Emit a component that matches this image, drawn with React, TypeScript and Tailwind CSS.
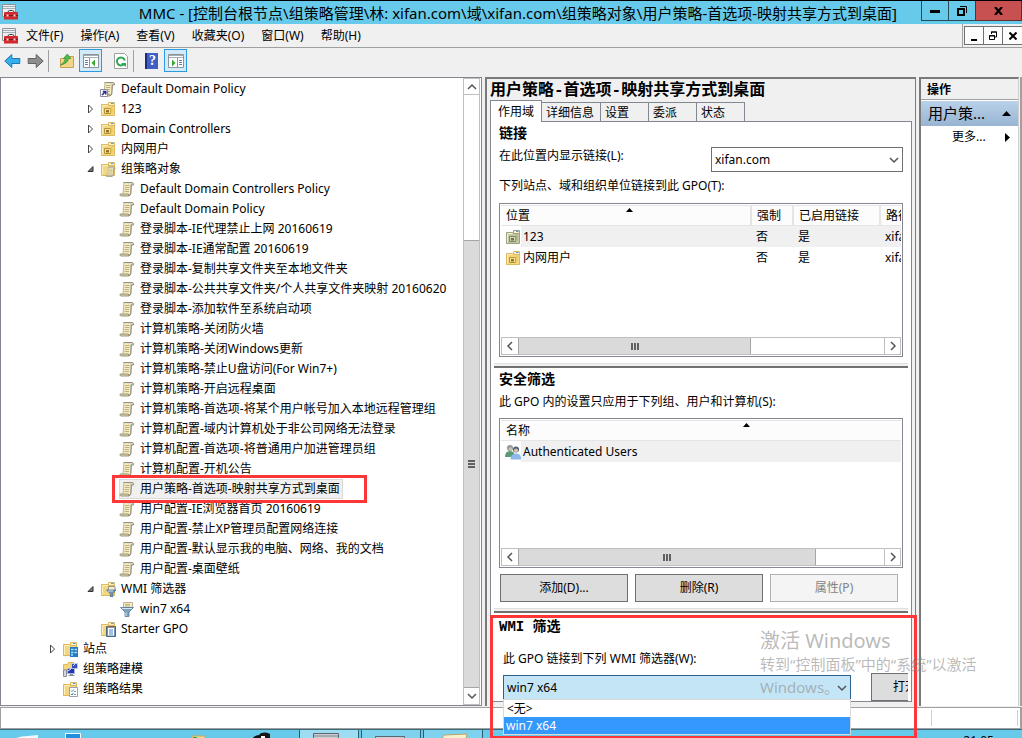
import type { ReactNode } from "react";

type IconName =
  | "gpo"
  | "link"
  | "ou"
  | "ouGreen"
  | "gpoFolder"
  | "wmiFolder"
  | "filter"
  | "starter"
  | "sites"
  | "modeling"
  | "results"
  | "users";

type TreeItem = {
  label: string;
  icon: IconName;
  depth: 0 | 2 | 3;
  state?: "open" | "closed";
  selected?: boolean;
};

const indent = { 0: "pl-[45px]", 2: "pl-[83px]", 3: "pl-[102px]" };

const tree: TreeItem[] = [
  { label: "Default Domain Policy", icon: "link", depth: 2 },
  { label: "123", icon: "ou", depth: 2, state: "closed" },
  { label: "Domain Controllers", icon: "ou", depth: 2, state: "closed" },
  { label: "内网用户", icon: "ou", depth: 2, state: "closed" },
  { label: "组策略对象", icon: "gpoFolder", depth: 2, state: "open" },
  { label: "Default Domain Controllers Policy", icon: "gpo", depth: 3 },
  { label: "Default Domain Policy", icon: "gpo", depth: 3 },
  { label: "登录脚本-IE代理禁止上网 20160619", icon: "gpo", depth: 3 },
  { label: "登录脚本-IE通常配置 20160619", icon: "gpo", depth: 3 },
  { label: "登录脚本-复制共享文件夹至本地文件夹", icon: "gpo", depth: 3 },
  { label: "登录脚本-公共共享文件夹/个人共享文件夹映射 20160620", icon: "gpo", depth: 3 },
  { label: "登录脚本-添加软件至系统启动项", icon: "gpo", depth: 3 },
  { label: "计算机策略-关闭防火墙", icon: "gpo", depth: 3 },
  { label: "计算机策略-关闭Windows更新", icon: "gpo", depth: 3 },
  { label: "计算机策略-禁止U盘访问(For Win7+)", icon: "gpo", depth: 3 },
  { label: "计算机策略-开启远程桌面", icon: "gpo", depth: 3 },
  { label: "计算机策略-首选项-将某个用户帐号加入本地远程管理组", icon: "gpo", depth: 3 },
  { label: "计算机配置-域内计算机处于非公司网络无法登录", icon: "gpo", depth: 3 },
  { label: "计算机配置-首选项-将普通用户加进管理员组", icon: "gpo", depth: 3 },
  { label: "计算机配置-开机公告", icon: "gpo", depth: 3 },
  { label: "用户策略-首选项-映射共享方式到桌面", icon: "gpo", depth: 3, selected: true },
  { label: "用户配置-IE浏览器首页 20160619", icon: "gpo", depth: 3 },
  { label: "用户配置-禁止XP管理员配置网络连接", icon: "gpo", depth: 3 },
  { label: "用户配置-默认显示我的电脑、网络、我的文档", icon: "gpo", depth: 3 },
  { label: "用户配置-桌面壁纸", icon: "gpo", depth: 3 },
  { label: "WMI 筛选器", icon: "wmiFolder", depth: 2, state: "open" },
  { label: "win7 x64", icon: "filter", depth: 3 },
  { label: "Starter GPO", icon: "starter", depth: 2 },
  { label: "站点", icon: "sites", depth: 0, state: "closed" },
  { label: "组策略建模", icon: "modeling", depth: 0 },
  { label: "组策略结果", icon: "results", depth: 0 },
];

const menus = ["文件(F)", "操作(A)", "查看(V)", "收藏夹(O)", "窗口(W)", "帮助(H)"];

const bitmapFont = "font-['Liberation_Mono','Noto_Sans_CJK_SC',monospace]";

function FolderShape({ fill = "#f3d67f", edge = "#dcb95f" }: { fill?: string; edge?: string }) {
  return (
    <>
      <path d="M8.500 1.500h6v3h-6z" fill="#fff3cf" stroke={edge} />
      <path d="M11 2.500h2.500" stroke="#4f9be0" />
      <path d="M1.500 3.500h6l1.500 1h5.500v10h-13z" fill={fill} stroke={edge} />
      <path d="M2.500 4.500h5M2.500 5v8.500" stroke="#fff0bf" />
    </>
  );
}

function ScrollShape() {
  return (
    <>
      <path d="M5 1.500h8l-1 2-.5 9.500-1 1.500h-7.500l1-2z" fill="#f5ecc4" stroke="#bdb592" />
      <path d="M4.500 1.500h8.500q2 .3 1.500 2.500h-2" fill="#ded9c8" stroke="#96917f" />
      <path d="M12.500 3.500l-.6 9" stroke="#96917f" />
      <path d="M1 13h8.500l.3 2h-8q-1-.5-.8-2z" fill="#d8ceaa" stroke="#a09978" />
      <path d="M9.500 14.800q2.200-.3 2.400-2.300" fill="none" stroke="#8b8572" />
      <path d="M6 4.500h4.500M6 6.500h4.500M5.500 8.500h4.500M5.500 10.500h4.500" stroke="#bcaf80" />
    </>
  );
}

function Icon({ name }: { name: IconName }) {
  let body: ReactNode;
  switch (name) {
    case "gpo":
      body = <ScrollShape />;
      break;
    case "link":
      body = (
        <>
          <ScrollShape />
          <path d="M.5 8.500h7v7h-7z" fill="#fff" stroke="#8c8c9c" />
          <path d="M2 14l3-3M2.800 10.500h3v3" stroke="#2b2f8f" strokeWidth="1.500" fill="none" />
        </>
      );
      break;
    case "ou":
    case "ouGreen":
      body = (
        <>
          <FolderShape
            fill={name === "ou" ? "#f3d67f" : "#c3c8a0"}
            edge={name === "ou" ? "#dcb95f" : "#9ba283"}
          />
          <path d="M4.500 7.500h6v5h-6z" fill={name === "ou" ? "#f8e3a0" : "#d2d6b4"} stroke={name === "ou" ? "#b8922f" : "#7e866a"} />
          <path d="M6 9h3v2.500h-3z" fill={name === "ou" ? "#8f7228" : "#6c7355"} />
          <path d="M10.500 6.500l2-1.500v6l-2 1.500z" fill={name === "ou" ? "#e9c45c" : "#a9b087"} />
        </>
      );
      break;
    case "gpoFolder":
      body = (
        <>
          <FolderShape />
          <g transform="translate(5 5) scale(.7)">
            <ScrollShape />
          </g>
        </>
      );
      break;
    case "wmiFolder":
      body = (
        <>
          <FolderShape />
          <path d="M8.500 5.500h6.500v4h-6.500z" fill="#f4ecd0" stroke="#9a9580" />
          <path d="M6.500 9h9.500l-3.200 3.500v3.500h-2.500v-3.500z" fill="#6f96b8" stroke="#456a8c" strokeWidth=".7" />
          <path d="M8 10h5" stroke="#c8dff0" />
        </>
      );
      break;
    case "filter":
      body = (
        <>
          <path d="M4.500 1.500h9v5h-9z" fill="#f7edc6" stroke="#b8b091" />
          <path d="M6 3.500h5M6 5h5" stroke="#bcaf80" />
          <path d="M1.500 6.500h13l-4.500 4.500v4.500h-4v-4.500z" fill="#7da2c0" stroke="#557a9a" strokeWidth=".8" />
          <path d="M3 7.500h10M7 11.500v3.500" stroke="#d3e6f3" />
        </>
      );
      break;
    case "starter":
      body = (
        <>
          <FolderShape />
          <path d="M6.500 5.500h9v10h-9z" fill="#6f93bd" stroke="#4a6987" />
          <path d="M6 5.500h10" stroke="#9a6239" />
          <path d="M8 7h6v7.500h-6z" fill="#fff" />
          <path d="M9 9h4M9 11h4M9 13h4" stroke="#4a7fc0" />
        </>
      );
      break;
    case "sites":
      body = (
        <>
          <FolderShape />
          <path d="M8 6h8v10h-8z" fill="#2479c4" />
          <path d="M9 8.500h2.500M12.500 8.500h2.500M9 11.500h2.500M12.500 11.500h2.500M9 14h2" stroke="#a8e0fa" strokeWidth="1.600" />
        </>
      );
      break;
    case "modeling":
      body = (
        <>
          <path d="M1.500 3.500h4l1-2h5v7h-10z" fill="#f3d67f" stroke="#dcb95f" />
          <path d="M9.500 2.500h6v5h-6z" fill="#2f4fc0" stroke="#c5cbe0" />
          <path d="M5.500 7.500h7v5h-7z" fill="#2436b8" stroke="#aeb5cf" />
          <path d="M6 10l3-2M11 5l2-2" stroke="#d3dcff" />
          <path d="M6.500 14.500h6M8 13.500h3" stroke="#8a909c" />
          <path d="M1.500 9v6.500h3v-6.500z" stroke="#8a909c" fill="#d4d7dc" />
        </>
      );
      break;
    case "results":
      body = (
        <>
          <FolderShape />
          <path d="M7.500 6.500h8v9h-8z" fill="#fff" stroke="#9aa2ae" />
          <path d="M9 9.500l1 1 2-2M9 13l1 1 1.500-2" stroke="#2a83b7" fill="none" />
          <path d="M12 10.500h2M12 13.500h2" stroke="#89939d" />
        </>
      );
      break;
    case "users":
      body = (
        <>
          <circle cx="5" cy="4" r="3" fill="#8c9a92" />
          <circle cx="5.500" cy="5" r="1.800" fill="#c9c4b4" />
          <path d="M0 13q0-6 5-6t5 6z" fill="#5c9a78" />
          <circle cx="11" cy="5.500" r="3" fill="#4d5f78" />
          <circle cx="11" cy="6.500" r="2" fill="#d9c4ac" />
          <path d="M5.500 15.500q0-6 5.500-6t5 6z" fill="#8cb9ea" />
        </>
      );
      break;
  }
  return (
    <svg className="size-4 shrink-0" viewBox="0 0 16 16" aria-hidden="true">
      {body}
    </svg>
  );
}

function ConsoleIcon() {
  return (
    <svg className="size-4 shrink-0" viewBox="0 0 16 16" aria-hidden="true">
      <path d="M.5.500h13v12h-13z" fill="#edf0f3" stroke="#8b949d" />
      <path d="M1 2.500h12M1 4.500h12" stroke="#a5adb5" />
      <path d="M6 8.500q0-2 1.500-2h3q1.500 0 1.500 2" fill="none" stroke="#3d3d3d" />
      <path d="M2 9q0-1 1-1h12q1 0 1 1v6.500h-14z" fill="#cf2a30" />
      <path d="M2 11.500h14" stroke="#8a1519" />
      <path d="M4.500 10.500h2v2h-2zM11.500 10.500h2v2h-2z" fill="#f4d6d6" />
    </svg>
  );
}

function ArrowIcon({ back }: { back?: boolean }) {
  return (
    <svg className="h-4 w-[17px]" viewBox="0 0 17 16" aria-hidden="true">
      {back ? (
        <path d="M.8 8l7-6.500v4h8v5h-8v4z" fill="#35aeea" stroke="#1c78b8" />
      ) : (
        <path d="M16.200 8l-7-6.500v4h-8v5h8v4z" fill="#8d8d8d" stroke="#636363" />
      )}
    </svg>
  );
}

function PaneIcon({ right }: { right?: boolean }) {
  return (
    <svg className="size-4" viewBox="0 0 16 16" aria-hidden="true">
      <path d="M.5 1.500h15v13h-15z" fill="#fff" stroke="#8b949d" />
      <path d="M1 2.500h14M1 4.500h14" stroke="#a5adb5" />
      <path d={right ? "M9.500 5v9" : "M6.500 5v9"} stroke="#8b949d" />
      <path
        d={right ? "M11 7.500h3M11 9.500h3M11 11.500h3" : "M2 7.500h3M2 9.500h3M2 11.500h3"}
        stroke="#5c83b5"
      />
      <path d={right ? "M4 6.500l3.500 3.500-3.500 3.500z" : "M12 6.500l-3.500 3.500 3.500 3.500z"} fill="#38a832" />
    </svg>
  );
}

function Chevron({ dir, className = "size-2.5" }: { dir: "up" | "down" | "left" | "right"; className?: string }) {
  const paths = {
    up: "M1 7l4-4 4 4",
    down: "M1 3l4 4 4-4",
    left: "M7 1l-4 4 4 4",
    right: "M3 1l4 4-4 4",
  };
  return (
    <svg className={className} viewBox="0 0 10 10" fill="none" stroke="#555" strokeWidth="1.500" aria-hidden="true">
      <path d={paths[dir]} />
    </svg>
  );
}

function Expander({ state }: { state?: "open" | "closed" }) {
  if (!state) return <span className="w-4 shrink-0" />;
  return (
    <button className="flex w-4 shrink-0 justify-start pl-0.5" aria-label={state === "open" ? "折叠" : "展开"}>
      <svg className="size-2.5" viewBox="0 0 10 10" aria-hidden="true">
        {state === "open" ? (
          <path d="M7 2.500v5h-5z" fill="#777" stroke="#333" />
        ) : (
          <path d="M2.500 1l4 4-4 4z" fill="#fff" stroke="#444" />
        )}
      </svg>
    </button>
  );
}

function TreePane() {
  return (
    <section className="flex w-[482px] shrink-0 border border-[#828790] bg-white">
      <ul className="min-w-0 flex-1 overflow-hidden pt-px">
        {tree.map((item, i) => (
          <li key={i} className={`flex h-5 items-center whitespace-nowrap ${indent[item.depth]}`}>
            <Expander state={item.state} />
            {item.selected ? (
              <div className="relative flex items-center">
                <span className="flex h-5 items-center border border-[#d9d9d9] bg-[#f0f0f0]">
                  <span className="-ml-px flex items-center gap-[5px] pr-0.5">
                    <Icon name={item.icon} />
                    {item.label}
                  </span>
                </span>
                <span className="absolute -top-1 -right-6 -bottom-1 -left-[7px] border-[3px] border-[#fb3737]" />
              </div>
            ) : (
              <span className="flex items-center gap-[5px]">
                <Icon name={item.icon} />
                {item.label}
              </span>
            )}
          </li>
        ))}
      </ul>
      <div className="mr-px flex w-[17px] shrink-0 flex-col border border-[#bfbfbf] bg-white">
        <button className="flex h-4 items-center justify-center border-b border-[#bfbfbf]" aria-label="向上滚动">
          <Chevron dir="up" />
        </button>
        <div className="basis-0 grow-[145]" />
        <div className="flex basis-0 grow-[448] flex-col items-center justify-center gap-px border-y border-[#a6a6a6] bg-[#dadada]">
          <span className="h-0.5 w-[7px] bg-[#606060]" />
          <span className="h-0.5 w-[7px] bg-[#606060]" />
          <span className="h-0.5 w-[7px] bg-[#606060]" />
        </div>
        <button className="flex h-4 items-center justify-center" aria-label="向下滚动">
          <Chevron dir="down" />
        </button>
      </div>
    </section>
  );
}

function HScroll({ thumb }: { thumb: string }) {
  return (
    <div className="flex h-[18px] shrink-0 border border-[#bfbfbf] bg-white">
      <button className="flex w-4 items-center justify-center" aria-label="向左滚动">
        <Chevron dir="left" />
      </button>
      <div className={`flex items-center justify-center gap-px border-x border-[#a6a6a6] bg-[#dadada] ${thumb}`}>
        <span className="h-[7px] w-0.5 bg-[#606060]" />
        <span className="h-[7px] w-0.5 bg-[#606060]" />
        <span className="h-[7px] w-0.5 bg-[#606060]" />
      </div>
      <div className="flex-1" />
      <button className="flex w-4 items-center justify-center border-l border-[#bfbfbf]" aria-label="向右滚动">
        <Chevron dir="right" />
      </button>
    </div>
  );
}

function SortMark() {
  return (
    <svg className="absolute top-0.5 left-1/2 h-1 w-[7px]" viewBox="0 0 7 4" aria-hidden="true">
      <path d="M0 4l3.500-4 3.500 4z" />
    </svg>
  );
}

function LinksTable() {
  const rows: { name: string; icon: IconName }[] = [
    { name: "123", icon: "ouGreen" },
    { name: "内网用户", icon: "ou" },
  ];
  const th = "border-r-2 border-[#e5e5e5] bg-[#fcfcfc] px-[5px] text-left font-normal";
  return (
    <div className="flex h-[154px] flex-col border border-[#828790] bg-white p-px">
      <div className="flex-1 overflow-hidden">
        <table className="w-[450px] table-fixed border-collapse whitespace-nowrap">
          <thead>
            <tr className="h-5 border-y border-[#e5e5e5]">
              <th className={`relative w-[250px] ${th}`}>
                位置
                <SortMark />
              </th>
              <th className={`w-[42px] ${th}`}>强制</th>
              <th className={`w-[87px] ${th}`}>已启用链接</th>
              <th className={th}>路径</th>
            </tr>
          </thead>
          <tbody>
            {rows.map((row, i) => (
              <tr key={row.name} className={`h-[21px] ${i === 0 ? "bg-[#f0f0f0]" : ""}`}>
                <td>
                  <span className="flex items-center gap-0.5">
                    <span className="flex h-[21px] w-5 items-center justify-end bg-white">
                      <Icon name={row.icon} />
                    </span>
                    {row.name}
                  </span>
                </td>
                <td className="px-[5px]">否</td>
                <td className="px-[5px]">是</td>
                <td className="px-[5px]">xifan.com</td>
              </tr>
            ))}
          </tbody>
        </table>
      </div>
      <HScroll thumb="w-[233px]" />
    </div>
  );
}

function SecurityTable() {
  return (
    <div className="flex h-[150px] flex-col border border-[#828790] bg-white p-px">
      <div className="flex-1 overflow-hidden">
        <table className="w-[484px] table-fixed border-collapse whitespace-nowrap">
          <thead>
            <tr className="h-5 border-y border-[#e5e5e5]">
              <th className="relative bg-[#fcfcfc] px-[5px] text-left font-normal">
                名称
                <SortMark />
              </th>
            </tr>
          </thead>
          <tbody>
            <tr className="h-[21px] bg-[#f0f0f0]">
              <td>
                <span className="flex items-center gap-0.5">
                  <span className="flex h-[21px] w-5 items-center justify-end bg-white">
                    <Icon name="users" />
                  </span>
                  Authenticated Users
                </span>
              </td>
            </tr>
          </tbody>
        </table>
      </div>
      <HScroll thumb="w-[298px]" />
    </div>
  );
}

function Divider() {
  return <div className="-mx-[5px] h-[5px] shrink-0 border-t border-b-2 border-t-[#e0e0e0] border-b-[#707070] bg-[#f0f0f0]" />;
}

function Heading({ children }: { children: ReactNode }) {
  return <h2 className={`text-[14px] leading-5 font-bold ${bitmapFont}`}>{children}</h2>;
}

function ScopePane() {
  const tabs = ["详细信息", "设置", "委派", "状态"];
  const tabWidth = ["w-[59px]", "w-12", "w-12", "w-12"];
  return (
    <section className="relative flex min-w-0 flex-1 flex-col border-t-2 border-r border-l-2 border-[#7a7a7a] bg-[#f0f0f0] pr-[3px] pb-1 pl-[3px]">
      <h1 className={`h-[21px] overflow-hidden text-[16px] leading-6 font-bold whitespace-nowrap ${bitmapFont}`}>
        用户策略-首选项-映射共享方式到桌面
      </h1>
      <div role="tablist" className="flex items-end">
        <button
          role="tab"
          aria-selected="true"
          className="relative z-10 -mb-px h-[22px] w-[52px] border border-b-0 border-[#828790] bg-white"
        >
          作用域
        </button>
        {tabs.map((tab, i) => (
          <button
            key={tab}
            role="tab"
            aria-selected="false"
            className={`h-[19px] border-t border-r border-[#828790] pl-1 text-left leading-5 whitespace-nowrap ${tabWidth[i]}`}
          >
            {tab}
          </button>
        ))}
      </div>
      <div className="flex min-h-0 flex-1 flex-col border border-[#828790] bg-white px-2">
        <div className="pt-0.5">
          <Heading>链接</Heading>
        </div>
        <div className="mt-0.5 flex items-start justify-between">
          <label htmlFor="location" className="leading-5">
            在此位置内显示链接(L):
          </label>
          <span className="relative mt-px flex w-48 items-center">
            <select id="location" className="h-[25px] w-full appearance-none border border-[#707070] bg-white px-[3px]">
              <option>xifan.com</option>
            </select>
            <Chevron dir="down" className="pointer-events-none absolute right-1 size-2.5" />
          </span>
        </div>
        <p className="mt-1 mb-[7px] leading-5">下列站点、域和组织单位链接到此 GPO(T):</p>
        <LinksTable />
        <div className="pt-1.5">
          <Divider />
        </div>
        <div className="pt-0.5">
          <Heading>安全筛选</Heading>
        </div>
        <p className="mt-0.5 mb-1.5 leading-5">此 GPO 内的设置只应用于下列组、用户和计算机(S):</p>
        <SecurityTable />
        <div className="flex gap-[7px] pt-1.5 pr-[5px] pl-px">
          <button className="h-7 flex-1 border border-[#707070] bg-[#dddddd]">添加(D)...</button>
          <button className="h-7 flex-1 border border-[#707070] bg-[#dddddd]">删除(R)</button>
          <button disabled className="h-7 flex-1 border border-[#adb2b5] bg-[#f4f4f4] text-[#838383]">
            属性(P)
          </button>
        </div>
        <div className="pt-1.5">
          <Divider />
        </div>
        <div className="pt-1">
          <Heading>WMI 筛选</Heading>
        </div>
        <label htmlFor="wmi" className="mt-3 ml-1 leading-5">
          此 GPO 链接到下列 WMI 筛选器(W):
        </label>
        <div className="mt-1 -mr-[5px] ml-1 flex items-start gap-5 overflow-hidden">
          <span className="relative mt-0.5 flex flex-1 items-center">
            <select
              id="wmi"
              className="h-[25px] w-full appearance-none border border-[#2c628b] bg-[#c4e5f6] px-[3px]"
            >
              <option>win7 x64</option>
            </select>
            <Chevron dir="down" className="pointer-events-none absolute right-1 size-2.5" />
          </span>
          <span className="flex w-[37px] overflow-hidden">
            <button className="h-7 w-20 shrink-0 border border-[#707070] bg-[#dddddd] pl-[21px] text-left">
              打开(O)
            </button>
          </span>
        </div>
      </div>
      <ul
        role="listbox"
        aria-label="WMI 筛选器"
        className="absolute right-16 -bottom-[29px] left-4 z-20 border border-[#dadada] bg-white"
      >
        <li role="option" aria-selected="false" className="h-[17px] pl-[3px] leading-[17px]">
          &lt;无&gt;
        </li>
        <li role="option" aria-selected="true" className="h-[17px] bg-[#3399ff] pl-0.5 leading-[17px] text-white">
          win7 x64
        </li>
      </ul>
      <span className="absolute -right-0.5 -bottom-[33px] left-[3px] z-30 h-[124px] border-[3px] border-[#fb3737]" />
    </section>
  );
}

function ActionsPane() {
  return (
    <aside className="flex w-[100px] shrink-0 flex-col border-t-2 border-r border-l-2 border-[#7a7a7a] border-r-[#d0d0d0] bg-white">
      <h2 className="h-[21px] border-b border-[#a0a0a0] bg-[#f0f0f0] pl-1.5 leading-[21px] font-bold">操作</h2>
      <button className="mt-px flex h-[25px] items-center justify-between bg-linear-to-b from-[#b9d1ea] to-[#98b4d2] px-[7px] text-[15px]">
        用户策...
        <svg className="h-[5px] w-[9px]" viewBox="0 0 9 5" aria-hidden="true">
          <path d="M0 5l4.500-5 4.500 5z" />
        </svg>
      </button>
      <button className="flex h-[22px] items-center justify-between pr-2 pl-[31px]">
        更多...
        <svg className="h-[9px] w-[5px]" viewBox="0 0 5 9" aria-hidden="true">
          <path d="M0 0l5 4.500-5 4.500z" />
        </svg>
      </button>
    </aside>
  );
}

function TitleBar() {
  return (
    <header className="flex h-6 shrink-0 items-start border-t border-black bg-[#68caea]">
      <span className="pt-[3px] pl-0.5">
        <ConsoleIcon />
      </span>
      <h1 className="min-w-0 flex-1 overflow-hidden pr-6 text-right text-[15px] leading-6 whitespace-nowrap">
        MMC - [控制台根节点\组策略管理\林: xifan.com\域\xifan.com\组策略对象\用户策略-首选项-映射共享方式到桌面]
      </h1>
      <button className="flex h-5 w-[28px] items-center justify-center border border-t-0 border-[#264a56]" aria-label="最小化">
        <span className="mt-0.5 h-[3px] w-2.5 bg-black" />
      </button>
      <button className="flex h-5 w-[26px] items-center justify-center border-b border-[#264a56]" aria-label="还原">
        <svg className="size-2.5" viewBox="0 0 10 10" fill="none" stroke="#000" aria-hidden="true">
          <path d="M3 .5h6.500v6.500" />
          <path d="M1 3h6v6h-6z" strokeWidth="2" />
        </svg>
      </button>
      <button className="flex h-5 w-[47px] items-center justify-center border border-t-0 border-[#5f2f2c] bg-[#c75050]" aria-label="关闭">
        <svg className="h-2 w-[9px]" viewBox="0 0 9 8" stroke="#000" strokeWidth="2.200" aria-hidden="true">
          <path d="M1 0l7 8M8 0l-7 8" />
        </svg>
      </button>
    </header>
  );
}

function MenuBar() {
  const box = "-ml-px flex h-[19px] w-5 items-center justify-center border border-[#707070] bg-[#fcfcfc]";
  return (
    <nav className="flex h-6 shrink-0 items-center border-b border-[#a0a0a0] pl-0.5">
      <ConsoleIcon />
      <div className="flex flex-1 gap-[17px] pl-2">
        {menus.map((menu) => (
          <button key={menu} className="whitespace-nowrap">
            {menu}
          </button>
        ))}
      </div>
      <div className="flex h-6 items-center border-l border-[#a0a0a0] pl-0.5">
        <button className={box} aria-label="最小化子窗口">
          <span className="mt-2 h-0.5 w-1.5 bg-black" />
        </button>
        <button className={box} aria-label="还原子窗口">
          <svg className="size-2.5" viewBox="0 0 10 10" fill="none" stroke="#000" aria-hidden="true">
            <path d="M3.500 3v-2h5v5h-2M3 1h6" />
            <path d="M1.500 4.500h5v4h-5zM1 5h6" />
          </svg>
        </button>
        <button className={`${box} border-r-0`} aria-label="关闭子窗口">
          <svg className="size-2" viewBox="0 0 8 8" stroke="#000" strokeWidth="2" aria-hidden="true">
            <path d="M.5.500l7 7M7.500.500l-7 7" />
          </svg>
        </button>
      </div>
    </nav>
  );
}

function ToolBar() {
  const active = "flex size-[23px] items-center justify-center border border-[#2a9be0] bg-[#d5eaf8]";
  return (
    <div className="flex h-[29px] shrink-0 items-center pr-1 pb-1 pl-1">
      <button aria-label="后退">
        <ArrowIcon back />
      </button>
      <button className="ml-1.5" aria-label="前进">
        <ArrowIcon />
      </button>
      <span className="ml-1 h-[22px] w-px bg-[#a0a0a0]" />
      <button className="ml-2.5" aria-label="上一级">
        <svg className="size-4" viewBox="0 0 16 16" aria-hidden="true">
          <path d="M1.500 5.500h6l1.500-2h5.500v11h-13z" fill="#f4d689" stroke="#c6a04c" />
          <path d="M1.500 12q4-2 5-6.500h-2l3.800-4.500 3.500 4.500h-2.300q-.5 5-8 6.500z" fill="#4cc04a" stroke="#2b8b30" strokeWidth=".7" />
        </svg>
      </button>
      <button className={`ml-1 ${active}`} aria-label="显示/隐藏控制台树">
        <PaneIcon />
      </button>
      <button className="ml-[11px]" aria-label="刷新">
        <svg className="size-4" viewBox="0 0 16 16" aria-hidden="true">
          <path d="M1.500.500h10l3 3v12h-13z" fill="#fff" stroke="#a0a0a0" />
          <path d="M11 11a4 4 0 1 1 .8-3.500" fill="none" stroke="#2fa84f" strokeWidth="2" />
          <path d="M8 10l5 0v4z" fill="#2fa84f" />
        </svg>
      </button>
      <span className="ml-1 h-[22px] w-px bg-[#a0a0a0]" />
      <button
        className="ml-[11px] flex h-4 w-[13px] items-center justify-center border-l-2 border-[#1d2d7c] bg-[#3f5fc4] font-['Liberation_Serif',serif] text-[14px] leading-4 font-bold text-white"
        aria-label="帮助"
      >
        ?
      </button>
      <button className={`ml-1.5 ${active}`} aria-label="显示/隐藏操作窗格">
        <PaneIcon right />
      </button>
    </div>
  );
}

function TaskBar() {
  return (
    <footer className="relative flex h-[9px] shrink-0 overflow-hidden border-t border-[#3a6b7b] bg-[#68caea]">
      <svg className="h-10 w-[490px] shrink-0" viewBox="0 0 490 40" aria-hidden="true">
        <path d="M12 9l10-2.500 16-1.500v20h-26z" fill="#f2f9fc" />
        <path d="M65.500 3.500h15v20h-15z" fill="#1f8fe0" stroke="#fff" />
        <path d="M192 6h13v12h-13z" fill="#f1dc92" stroke="#c9a85a" />
        <path d="M193 7h4v2h-4z" fill="#2fa84f" />
        <path d="M252 9q3-4 7-4l2-2q6-1.500 9 1v6h-18z" fill="#161616" />
        <path d="M261 6h4v4h-4z" fill="#fff" />
        <path d="M299.500-1h59v40h-59z" fill="#9edcf1" stroke="#2a5e6e" />
        <path d="M361.500-1h59v40h-59zM423.500-1h59v40h-59z" fill="#7fd2ee" stroke="#2a5e6e" />
        <path d="M313.500 3.500h25v20h-25z" fill="#c9ced3" stroke="#5c6670" />
        <path d="M314 6h24" stroke="#7e8790" />
        <path d="M375.500 6.500h29v20h-29z" fill="#c9ced3" stroke="#5c6670" />
        <path d="M444 5q-2 2-1 4h23l1-5z" fill="#f9efcd" stroke="#b8a76a" />
      </svg>
      <time className="mt-[3px] mr-7 ml-auto text-[12px] leading-4">21:05</time>
    </footer>
  );
}

export default function App() {
  return (
    <div className="relative flex h-screen flex-col overflow-hidden bg-[#f0f0f0] font-['Noto_Sans','Noto_Sans_CJK_SC',sans-serif] text-[12px] text-black">
      <TitleBar />
      <MenuBar />
      <ToolBar />
      <main className="flex min-h-0 flex-1 gap-[3px] border-r-2 border-[#a0a0a0] pr-px">
        <TreePane />
        <ScopePane />
        <ActionsPane />
      </main>
      <div className="mt-px flex h-[22px] shrink-0 border border-r-2 border-[#a0a0a0] bg-white">
        <span className="flex-1" />
        <span className="my-0.5 mr-0.5 w-[87px] border-x border-[#d0d0d0]" />
      </div>
      <TaskBar />
      <div className="pointer-events-none absolute right-9 bottom-[39px] z-40 w-[226px] text-[15px] leading-[23px] text-[#8c8c8c]/60">
        <p className="text-[20px] leading-6">激活 Windows</p>
        <p className="whitespace-nowrap">转到“控制面板”中的“系统”以激活</p>
        <p>Windows。</p>
      </div>
    </div>
  );
}
